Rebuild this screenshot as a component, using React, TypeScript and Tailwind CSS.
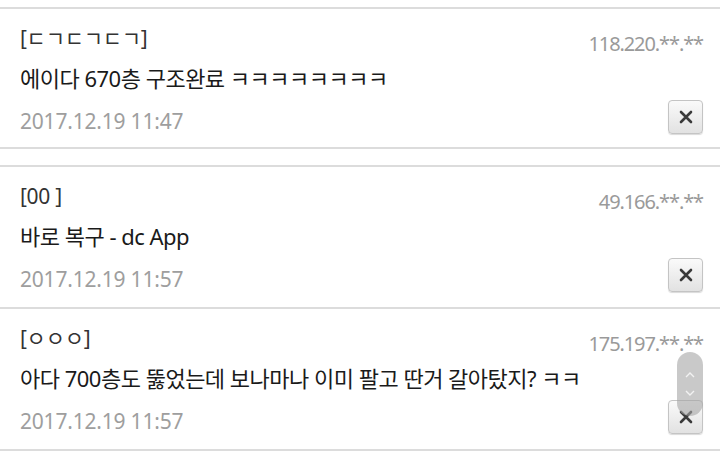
import React from "react";

const font = { fontFamily: '"Noto Sans", "Noto Sans CJK KR", sans-serif' };

function XButton() {
  return (
    <div className="w-[35px] h-[34px] rounded-[4px] border border-[#c4c4c4] bg-gradient-to-b from-[#fafafa] to-[#e2e2e2] flex items-center justify-center shadow-[0_1px_1px_rgba(0,0,0,0.15)]">
      <svg width="14" height="14" viewBox="0 0 14 14">
        <path d="M2 2 L12 12 M12 2 L2 12" stroke="#3a3a3a" strokeWidth="2.6" strokeLinecap="round" />
      </svg>
    </div>
  );
}

type C = { name: string; ip: string; text: string; date: string };

function Card({ c, scroll, short }: { c: C; scroll?: boolean; short?: boolean }) {
  return (
    <div className={`relative ${short ? "h-[140px]" : "h-[142px]"} border-b-2 border-[#dcdcdc] px-[20px]`}>
      <div className="flex justify-between items-start">
        <div className="mt-[16px] text-[21px] leading-[26px] text-[#333] tracking-[-0.3px]">{c.name}</div>
        <div className="mt-[23px] text-[20px] leading-[24px] text-[#9a9a9a] tracking-[-1.1px] mr-[-3px]">{c.ip}</div>
      </div>
      <div className="mt-[8px] text-[22px] leading-[28px] text-[#1a1a1a] tracking-[-0.5px]">{c.text}</div>
      <div className="flex justify-between items-start mt-[8px]">
        <div className="mt-[7px] text-[21px] leading-[28px] text-[#9e9e9e] tracking-[-0.2px]">{c.date}</div>
        <div className="mr-[-3px]">
          <XButton />
        </div>
      </div>
      {scroll && (
        <div className="absolute right-[17px] top-[43px] w-[26px] h-[64px] rounded-full bg-[rgba(165,165,165,0.6)] flex flex-col items-center justify-center gap-[12px]">
          <svg width="10" height="6" viewBox="0 0 10 6"><path d="M1 5 L5 1 L9 5" stroke="#f2f2f2" strokeWidth="1.4" fill="none" /></svg>
          <svg width="10" height="6" viewBox="0 0 10 6"><path d="M1 1 L5 5 L9 1" stroke="#f2f2f2" strokeWidth="1.4" fill="none" /></svg>
        </div>
      )}
    </div>
  );
}

export default function App() {
  const cards: C[] = [
    { name: "[ㄷㄱㄷㄱㄷㄱ]", ip: "118.220.**.**", text: "에이다 670층 구조완료 ㅋㅋㅋㅋㅋㅋㅋㅋ", date: "2017.12.19 11:47" },
    { name: "[00 ]", ip: "49.166.**.**", text: "바로 복구 - dc App", date: "2017.12.19 11:57" },
    { name: "[ㅇㅇㅇ]", ip: "175.197.**.**", text: "아다 700층도 뚫었는데 보나마나 이미 팔고 딴거 갈아탔지? ㅋㅋ", date: "2017.12.19 11:57" },
  ];
  return (
    <div className="w-[720px] h-[452px] bg-white overflow-hidden" style={font}>
      <div className="h-[7px]" />
      <div className="border-t-2 border-[#dcdcdc]">
        <Card c={cards[0]} short />
      </div>
      <div className="h-[16px]" />
      <div className="border-t-2 border-[#dcdcdc]">
        <Card c={cards[1]} />
        <Card c={cards[2]} scroll />
      </div>
    </div>
  );
}
